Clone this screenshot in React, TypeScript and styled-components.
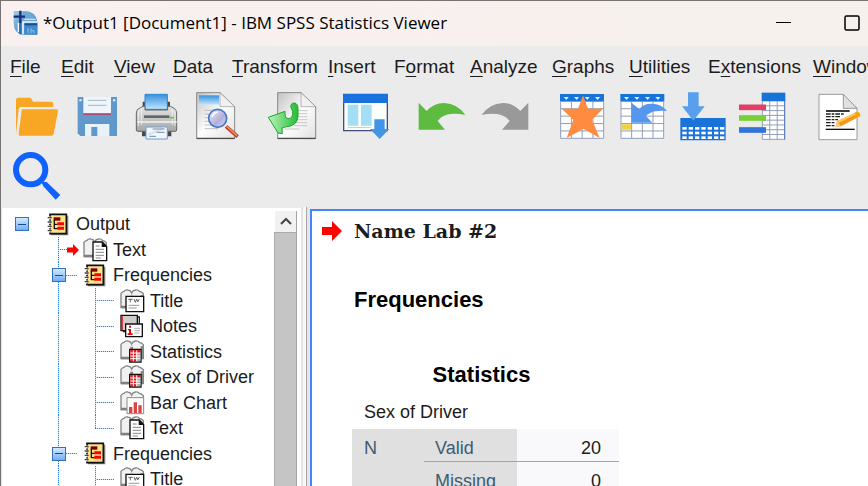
import React from "react";
import styled, { createGlobalStyle } from "styled-components";

const GlobalStyle = createGlobalStyle`
  *, *::before, *::after { box-sizing: border-box; }
  body { margin: 0; overflow: hidden; }
  button { font: inherit; color: inherit; background: none; border: 0; padding: 0; }
  svg { display: block; flex: none; }
`;

const sans = `"Liberation Sans", Arial, sans-serif`;

const Window = styled.div`
  display: flex;
  flex-direction: column;
  height: 100vh;
  overflow: hidden;
  background: #ebebeb;
  border-top: 1px solid #77726f;
  border-left: 1px solid #77726f;
  font-family: ${sans};
  color: #1b1b20;
`;

/* ---------- title bar ---------- */

const TitleBar = styled.header`
  display: flex;
  align-items: center;
  flex: none;
  height: 45px;
  padding: 0 8px 2px 12px;
  background: linear-gradient(90deg, #f9f0ef, #f6f1ed);
`;

const WindowTitle = styled.h1`
  flex: 1;
  margin: 0 0 0 5px;
  font: 400 17px/24px "Open Sans", "Noto Sans", sans-serif;
  color: #000;
  white-space: nowrap;
`;

const WindowControls = styled.div`
  display: flex;
  gap: 53px;
`;

/* ---------- menu bar ---------- */

const MenuBar = styled.nav`
  display: grid;
  flex: none;
  grid-template-columns: 51px 53px 59px 59px 96px 66px 76px 82px 77px 79px 105px auto;
  align-items: center;
  height: 41px;
  padding-left: 9px;
  overflow: hidden;
`;

const MenuItem = styled.button`
  font-size: 19px;
  line-height: 24px;
  text-align: left;
  white-space: nowrap;

  u {
    text-decoration-thickness: 1px;
    text-underline-offset: 3px;
  }
`;

/* ---------- tool bar ---------- */

const ToolBar = styled.div`
  display: flex;
  flex: none;
  flex-wrap: wrap;
  column-gap: 16px;
  padding-left: 6px;
`;

const ToolGroup = styled.div`
  display: flex;
`;

const ToolButton = styled.button`
  width: 60px;
  height: 60px;
`;

/* ---------- panes ---------- */

const Panes = styled.main`
  display: flex;
  flex: 1;
  min-height: 0;
`;

const Outline = styled.aside`
  display: flex;
  flex: none;
  width: 300px;
  margin-top: 1px;
  padding: 3px 4px 0 1px;
  background: #fff;
  border-left: 1px solid #e2e2e2;
  overflow: hidden;
`;

const Tree = styled.div`
  flex: 1;
  overflow: hidden;
`;

const TreeRow = styled.div`
  display: flex;
  align-items: center;
  height: 26px;

  &:nth-child(even) { height: 25px; }
`;

type GuideKind = "blank" | "line" | "branch" | "last";

const vertical = "repeating-linear-gradient(180deg, #2383e6 0 1px, #cfe5fb 1px 2px)";
const horizontal = "repeating-linear-gradient(90deg, #2383e6 0 1px, #cfe5fb 1px 2px)";
const guideImage: Record<GuideKind, string> = {
  blank: "none",
  line: `${vertical} 18px 0 / 1px 100% no-repeat`,
  branch: `${vertical} 18px 0 / 1px 100% no-repeat, ${horizontal} 18px 50% / 19px 1px no-repeat`,
  last: `${vertical} 18px 0 / 1px 50% no-repeat, ${horizontal} 18px 50% / 19px 1px no-repeat`,
};

const Guide = styled.span<{ $kind: GuideKind }>`
  display: flex;
  align-items: center;
  justify-content: center;
  flex: none;
  align-self: stretch;
  width: 37px;
  background: ${(p) => guideImage[p.$kind]};
`;

const Toggle = styled.button`
  display: flex;
  align-items: center;
  justify-content: center;
  width: 14px;
  height: 14px;
  background: linear-gradient(180deg, #d3e8fd, #6fb0f5);
  border: 1px solid #3570b5;

  &::before {
    content: "";
    width: 8px;
    height: 1px;
    background: #174b87;
  }
`;

const IconCell = styled.span`
  display: flex;
  align-items: center;
  justify-content: center;
  flex: none;
  width: 36px;
`;

const CurrentMark = styled.span`
  display: flex;
  width: 12px;
  margin-left: -16px;
  margin-right: 4px;
  background: #fff;
`;

const TreeLabel = styled.span`
  font-size: 18px;
  line-height: 24px;
  white-space: nowrap;
`;

const ScrollBar = styled.div`
  display: flex;
  flex-direction: column;
  flex: none;
  width: 23px;
  border-right: 1px solid #a3a3a3;
`;

const ScrollUp = styled.button`
  display: flex;
  align-items: center;
  justify-content: center;
  height: 21px;
  margin-left: 1px;
  background: #f1f1f1;
`;

const ScrollThumb = styled.div`
  flex: 1;
  background: #c5c5c5;
  border: solid #ababab;
  border-width: 1px 0 0 1px;
`;

const Splitter = styled.div`
  flex: none;
  width: 9px;
  background: linear-gradient(90deg, #e4e4e4 0 2px, #f8f8f8 2px 5px, #a6a6a6 5px 6px, #e6e6e6 6px 9px);
`;

const Viewer = styled.section`
  flex: 1;
  min-width: 0;
  margin-top: 2px;
  padding: 8px 0 0 10px;
  background: #fff;
  border: solid #4386fb;
  border-width: 2px 0 0 2px;
  overflow: hidden;
  white-space: nowrap;
`;

const LogEntry = styled.div`
  display: flex;
  align-items: center;
  gap: 12px;
  height: 24px;
`;

const LogTitle = styled.h2`
  margin: 0;
  font: 700 19px/24px "DejaVu Serif", serif;
`;

const Body = styled.div`
  padding: 43px 0 0 30px;
`;

const SectionTitle = styled.h3`
  margin: 0 0 43px 2px;
  font-size: 22px;
  line-height: 28px;
  color: #000;
`;

const StatsTable = styled.table`
  width: 267px;
  border-collapse: collapse;
  font-size: 18px;
  line-height: 24px;
`;

const StatsCaption = styled.caption`
  padding-left: 12px;
  text-align: left;
`;

const StatsTitle = styled.strong`
  display: block;
  padding: 4px 20px 11px 0;
  font-size: 22px;
  line-height: 28px;
  text-align: center;
  color: #000;
`;

const Variable = styled.span`
  display: block;
  margin-bottom: 5px;
`;

const GroupHead = styled.th`
  width: 72px;
  padding: 7px 12px;
  background: #e0e0e0;
  color: #3d5c73;
  font-weight: 400;
  text-align: left;
  vertical-align: top;
`;

const RowHead = styled.th`
  width: 93px;
  padding: 7px 11px 1px;
  background: #e0e0e0;
  border-bottom: 1px solid #a4a4a4;
  color: #3d5c73;
  font-weight: 400;
  text-align: left;
`;

const Value = styled.td`
  padding: 7px 18px 1px;
  background: #f9f9fb;
  border-bottom: 1px solid #a4a4a4;
  text-align: right;
`;

/* ---------- drawings ---------- */

const AppIcon = () => (
  <svg width="25" height="25" viewBox="38 28 75 75" aria-hidden="true">
    <defs>
      <linearGradient id="app" x1="0" y1="0" x2="1" y2="1">
        <stop offset="0" stopColor="#a9cbe6" />
        <stop offset=".5" stopColor="#5d9bd0" />
        <stop offset="1" stopColor="#2a78bd" />
      </linearGradient>
    </defs>
    <path d="M40 31h34q34 2 37 36v35H68Q40 98 40 66z" fill="url(#app)" />
    <path d="M68 33q34 0 41 34H68z" fill="#6ea6d6" />
    <path d="M72 56h34" stroke="#c8dff0" strokeWidth="4" />
    <path d="M68 101V64h42" fill="none" stroke="#eef6fb" strokeWidth="5" />
    <path d="M54 66v28" stroke="#eef6fb" strokeWidth="4" />
    <path d="M73 73h38v28H73z" fill="#3f8ccd" />
    <path d="M73 71h38" stroke="#174f94" strokeWidth="6" />
    <path d="M83 82v16M92 82v16M92 90h9v8" stroke="#8cc0ea" strokeWidth="3" fill="none" />
    <path d="M60 66v35" stroke="#2a69ae" strokeWidth="6" />
    <path d="M60 30v37M40 48h34" stroke="#10327c" strokeWidth="7" />
  </svg>
);

const Gradients = () => (
  <svg width="0" height="0" aria-hidden="true">
    <defs>
      <linearGradient id="paper" x1="0" y1="0" x2="1" y2="1">
        <stop offset="0" stopColor="#c2c2c2" />
        <stop offset=".5" stopColor="#fdfdfd" />
        <stop offset="1" stopColor="#e2e2e2" />
      </linearGradient>
      <linearGradient id="sky" x1="0" y1="0" x2="0" y2="1">
        <stop offset="0" stopColor="#3590dc" />
        <stop offset="1" stopColor="#c2e6fb" />
      </linearGradient>
      <linearGradient id="metal" x1="0" y1="0" x2="0" y2="1">
        <stop offset="0" stopColor="#e6e6e6" />
        <stop offset="1" stopColor="#a5a5a5" />
      </linearGradient>
      <linearGradient id="lens" x1="0" y1="0" x2="1" y2="1">
        <stop offset="0" stopColor="#f1f1fb" />
        <stop offset=".6" stopColor="#b1afd9" />
        <stop offset="1" stopColor="#d3e0f5" />
      </linearGradient>
      <linearGradient id="leafy" x1="0" y1="0" x2="1" y2="0">
        <stop offset="0" stopColor="#baf3ba" />
        <stop offset="1" stopColor="#25bd36" />
      </linearGradient>
    </defs>
  </svg>
);

const Folder = () => (
  <>
    <path d="M48 149V44q0-6 6-6h35q5 0 7 6l3 6h54q7 0 7 7v9H62q-5 0-6 6z" fill="#f8a725" />
    <path d="M68 73h101q6 0 5 6l-13 67q-1 6-7 6H60q-5 0-4-6l9-69q1-4 3-4z" fill="#f8a725" />
  </>
);

const Save = () => (
  <>
    <path d="M233 36h118v117H241l-8-8z" fill="#6099c9" />
    <path d="M250 36h83v50h-83z" fill="#eef6fc" />
    <path d="M250 87h83" stroke="#cb2453" strokeWidth="4" />
    <path d="M264 46h55M264 61h55" stroke="#a8b8c4" strokeWidth="3" />
    <path d="M238 46h7M339 46h7" stroke="#e8f3fb" strokeWidth="6" />
    <path d="M255 117h73v37h-73z" fill="#e7f2fb" />
    <path d="M274 126h18v27h-18z" fill="#6099c9" />
  </>
);

const Printer = () => (
  <>
    <path d="M428 50h82v28h-82zM426 130h88v24h-88z" fill="#484848" />
    <path d="M435 28h67v45h-67z" fill="url(#sky)" stroke="#2787d8" strokeWidth="3" />
    <path d="M409 135V84q0-12 12-16l8-4h6v11h68V64h8l8 4q11 5 11 16v51q0 4-5 4H414q-5 0-5-4z" fill="url(#metal)" stroke="#666" strokeWidth="3" />
    <path d="M415 75v48M424 72v48M517 72v48M525 75v48" stroke="#fff" strokeWidth="3" opacity=".65" />
    <path d="M432 95h76" stroke="#646464" strokeWidth="8" />
    <path d="M509 98h13" stroke="#5bd22d" strokeWidth="5" />
    <path d="M412 111h118" stroke="#f2f2f2" strokeWidth="5" />
    <path d="M438 126h64v36h-64z" fill="#eff6fe" stroke="#6e9fcc" strokeWidth="3" />
    <path d="M444 149l50-20" stroke="#cfe3f5" strokeWidth="6" />
    <path d="M458 132h35M470 142h24M448 154h20" stroke="#7b8b99" strokeWidth="3" />
  </>
);

const PageShape = ({ x }: { x: number }) => (
  <>
    <path d={`M${x} 23h70l44 42v96H${x}z`} fill="url(#paper)" stroke="#888" strokeWidth="3" />
    <path d={`M${x} 160h114`} stroke="#4b4b4b" strokeWidth="4" />
    <path d={`M${x + 70} 23v42h44z`} fill="#f1f1f1" stroke="#999" strokeWidth="2" />
  </>
);

const Preview = () => (
  <>
    <PageShape x={590} />
    <path d="M597 31h60v28h-60z" fill="url(#sky)" />
    <path d="M614 76h30M614 87h30M614 98h30M614 109h30M614 120h34M614 131h40" stroke="#a5a5a5" strokeWidth="2" />
    <path d="M678 124l35 31" stroke="#b64223" strokeWidth="11" />
    <path d="M680 124l31 28" stroke="#ff936c" strokeWidth="4" />
    <circle cx="653" cy="100" r="27" fill="url(#lens)" stroke="#4878c2" strokeWidth="5" />
    <path d="M636 96q4-13 17-15" fill="none" stroke="#fff" strokeWidth="5" />
  </>
);

const Recall = () => (
  <>
    <PageShape x={83} />
    <path d="M134 77h38M134 86h38M134 95h38M134 104h38M134 113h38M130 122h42M104 132h44" stroke="#b1b1b1" strokeWidth="2" />
    <path d="M55 97l50-18q-1 20 9 22 16 0 14-22l-6-14q2-12 11-11 11 1 11 18v23q-2 28-38 31l-10 3 1 17-13-2z" fill="url(#leafy)" stroke="#20a52e" strokeWidth="3" strokeLinejoin="round" />
  </>
);

const Dialog = () => (
  <>
    <path d="M281 28h131v109H281z" fill="#fbfffc" stroke="#454b80" strokeWidth="4" />
    <path d="M279 27h135v27H279z" fill="#1972dd" />
    <path d="M293 59h32v63h-32zM333 59h32v63h-32zM293 126h70v3h-70z" fill="#a3def4" />
    <path d="M373 103h31v29h14l-29 30-29-30h13z" fill="#4294e6" />
  </>
);

const Undo = () => (
  <path d="M506 53l24 25q22-24 52-24 42 2 64 36-25-6-46-3-26 4-37 21l22 26h-79z" fill="#5dbb40" />
);

const Redo = () => (
  <path d="M835 53l-24 25q-22-24-52-24-42 2-64 36 25-6 46-3 26 4 38 21l-23 26h79z" fill="#999" />
);

const GridShape = ({ x, y, w, h, cols, rows }: { x: number; y: number; w: number; h: number; cols: number; rows: number }) => {
  let d = `M${x} ${y}h${w}v${h}h${-w}z`;
  for (let i = 1; i < cols; i++) d += `M${x + (w * i) / cols} ${y}v${h}`;
  for (let i = 1; i < rows; i++) d += `M${x} ${y + (h * i) / rows}h${w}`;
  return <path d={d} fill="#fff" stroke="#919eb8" strokeWidth="3" />;
};

const HeaderMarks = ({ x }: { x: number }) => (
  <>
    <path d={`M${x} 27h132v22h-132z`} fill="#1873d9" />
    {[11, 42, 74, 105].map((dx) => (
      <path key={dx} d={`M${x + dx} 36h15l-7 9z`} fill="#d8efff" />
    ))}
  </>
);

const StarGrid = () => (
  <>
    <GridShape x={47} y={49} w={129} h={111} cols={4} rows={5} />
    <HeaderMarks x={45} />
    <path d="M114 31l15 40h45l-33 33 23 55-49-28-50 28 20-55-35-33h49z" fill="#ff8b41" />
  </>
);

const GotoVariable = () => (
  <>
    <GridShape x={228} y={49} w={128} h={111} cols={4} rows={5} />
    <HeaderMarks x={226} />
    <path d="M231 118h27v16h-27z" fill="#f0d137" />
    <path d="M259 53l24 19q14-17 38-16 29 1 45 22-35-2-49 5-11 6-14 10l19 20h-63z" fill="#5597ee" />
  </>
);

const InsertCases = () => (
  <>
    <path d="M406 99h136v67H406z" fill="#1973d9" />
    {[126, 140, 154].map((y) =>
      [412, 431, 450, 469, 488, 507, 525].map((x) => (
        <rect key={`${x}-${y}`} x={x} y={y} width="13" height="8" fill="#fff" />
      )),
    )}
    <path d="M429 22h32v42h18l-34 43-34-43h18z" fill="#58a0ee" />
  </>
);

const ValueLabels = () => (
  <>
    <GridShape x={652} y={48} w={67} h={115} cols={3} rows={8} />
    <path d="M650 23h71v25h-71z" fill="#1873d9" />
    <path d="M719 48v116" stroke="#557ab5" strokeWidth="3" />
    <path d="M582 67h81" stroke="#e13f65" strokeWidth="17" />
    <path d="M582 99h81" stroke="#78cf36" strokeWidth="17" />
    <path d="M582 135h81" stroke="#3273d9" strokeWidth="17" />
  </>
);

const Script = () => (
  <>
    <path d="M822 28h73l41 42v94H822z" fill="#fff" stroke="#9a9a9a" strokeWidth="3" />
    <path d="M895 28v42h41z" fill="#e1e1e1" stroke="#999" strokeWidth="3" />
    <path d="M843 78h71" stroke="#111" strokeWidth="5" />
    <path d="M843 87h55M843 95h42M843 104h36M843 113h28M843 122h25" stroke="#222" strokeWidth="4" strokeDasharray="14 3 8 3" />
    <path d="M842 133h87" stroke="#111" strokeWidth="4" />
    <path d="M871 125l5-16 57-27q12-2 13 11l-58 31z" fill="#f7971d" />
    <path d="M878 112l56-27" stroke="#ffd14b" strokeWidth="5" />
    <path d="M871 125l5-16 12 15z" fill="#ffc68b" />
    <path d="M932 82q12-4 14 10l-9 5-8-13z" fill="#f6a800" />
  </>
);

const Search = () => (
  <>
    <circle cx="92" cy="254" r="44" fill="none" stroke="#0f62fe" strokeWidth="18" />
    <path d="M124 290l6 14 37 40 14-14-41-39z" fill="#0f62fe" />
  </>
);

type Tool = { label: string; x: number; y?: number; Art: () => React.JSX.Element };

const toolGroups: Tool[][] = [
  [
    { label: "Open", x: 21, Art: Folder },
    { label: "Save", x: 201, Art: Save },
    { label: "Print", x: 381, Art: Printer },
    { label: "Print preview", x: 561, Art: Preview },
  ],
  [{ label: "Export", x: 39, Art: Recall }],
  [{ label: "Recall dialogs", x: 267, Art: Dialog }],
  [
    { label: "Undo", x: 495, Art: Undo },
    { label: "Redo", x: 675, Art: Redo },
  ],
  [
    { label: "Go to data", x: 18, Art: StarGrid },
    { label: "Go to variable", x: 198, Art: GotoVariable },
    { label: "Insert cases", x: 378, Art: InsertCases },
    { label: "Value labels", x: 558, Art: ValueLabels },
  ],
  [{ label: "Run script", x: 786, Art: Script }],
  [{ label: "Find", x: 21, y: 186, Art: Search }],
];

const NotebookIcon = () => (
  <svg width="22" height="23" viewBox="0 0 66 69" aria-hidden="true">
    <path d="M12 65h50V8" fill="none" stroke="#8a8a8a" strokeWidth="4" />
    <path d="M9 4h49v58H9z" fill="#ffe289" stroke="#111" strokeWidth="5" />
    <path d="M2 15h9M2 28h9M2 41h9M2 54h9" stroke="#fff" strokeWidth="9" />
    <path d="M2 14h12M2 27h12M2 40h12M2 53h12" stroke="#444" strokeWidth="4" />
    <path d="M20 18h20" stroke="#790000" strokeWidth="10" />
    <path d="M22 21v27M22 34h10M22 47h10" stroke="#111" strokeWidth="4" />
    <path d="M31 32h20M31 46h20" stroke="#f00" strokeWidth="9" />
  </svg>
);

type LeafKind = "page" | "title" | "notes" | "table" | "chart";

const LeafIcon = ({ kind }: { kind: LeafKind }) => (
  <svg width="25" height="24" viewBox="0 0 75 72" aria-hidden="true">
    {kind !== "notes" && (
      <>
        <path d="M3 56V13q4-5 9-6 4-6 12-4 8 1 11 9 3-8 11-9 9-1 12 4 7 1 12 7v42H3z" fill="#f1f1f1" stroke="#858585" strokeWidth="4" />
        <path d="M3 54h30M35 20v36" stroke="#808080" strokeWidth="8" />
        <path d="M66 18v36" stroke="#8a8a8a" strokeWidth="8" />
      </>
    )}
    {kind === "page" && (
      <>
        <path d="M30 12h28l13 14v42H30z" fill="#fff" stroke="#111" strokeWidth="4" />
        <path d="M56 12v15h15z" fill="#111" />
        <path d="M38 24h12M38 34h25M38 43h25M38 52h25M38 60h16" stroke="#888" strokeWidth="3" />
      </>
    )}
    {kind === "title" && (
      <>
        <path d="M18 22h53v46H18z" fill="#fff" stroke="#111" strokeWidth="4" />
        <path d="M25 31h13M31 31v9M42 30l4 10 4-10 3 9 5-9" fill="none" stroke="#666" strokeWidth="3" />
        <path d="M26 49h32M26 57h24" stroke="#999" strokeWidth="3" />
      </>
    )}
    {kind === "notes" && (
      <>
        <path d="M3 4h49v46H3z" fill="#d0cccc" stroke="#111" strokeWidth="4" />
        <path d="M6 7v42" stroke="#e01818" strokeWidth="5" />
        <path d="M53 9h5v44H9" fill="none" stroke="#222" strokeWidth="4" />
        <path d="M17 30h50v38H17z" fill="#fff" stroke="#111" strokeWidth="4" />
        <path d="M27 35h6v6h-6zM24 45h9v13h5v5H23v-5h4v-9h-3z" fill="#e00b0b" />
        <path d="M43 43h17M43 50h17M43 57h14" stroke="#aaa" strokeWidth="3" />
      </>
    )}
    {kind === "table" && (
      <>
        <path d="M29 28h34v38H29z" fill="#fff" stroke="#111" strokeWidth="4" />
        <path d="M31 30h20v34H31zM51 30h10v9H51z" fill="#f01717" />
        <path d="M51 39h10v25H51z" fill="#aaa" />
        <path d="M40 31v33M50 31v33M31 39h30M31 48h30M31 56h30" stroke="#fff" strokeWidth="3" />
      </>
    )}
    {kind === "chart" && (
      <>
        <path d="M21 20h50v48H21z" fill="#fff" stroke="#8a8a8a" strokeWidth="3" />
        <path d="M27 48h10v18H27zM41 34h10v32H41zM55 43h10v23H55z" fill="#d94444" />
      </>
    )}
  </svg>
);

const RedArrow = ({ size }: { size: number }) => (
  <svg width={size} height={size} viewBox="0 0 20 20" aria-hidden="true">
    <path d="M0 6h10V0l10 10-10 10v-6H0z" fill="#f00" />
  </svg>
);

/* ---------- data ---------- */

const menus: [string, string, string][] = [
  ["", "F", "ile"],
  ["", "E", "dit"],
  ["", "V", "iew"],
  ["", "D", "ata"],
  ["", "T", "ransform"],
  ["", "I", "nsert"],
  ["F", "o", "rmat"],
  ["", "A", "nalyze"],
  ["", "G", "raphs"],
  ["", "U", "tilities"],
  ["E", "x", "tensions"],
  ["", "W", "indow"],
];

type Node = {
  label: string;
  guides: GuideKind[];
  icon: "notebook" | LeafKind;
  current?: boolean;
};

const nodes: Node[] = [
  { label: "Output", guides: ["blank"], icon: "notebook" },
  { label: "Text", guides: ["blank", "branch"], icon: "page", current: true },
  { label: "Frequencies", guides: ["blank", "branch"], icon: "notebook" },
  { label: "Title", guides: ["blank", "line", "branch"], icon: "title" },
  { label: "Notes", guides: ["blank", "line", "branch"], icon: "notes" },
  { label: "Statistics", guides: ["blank", "line", "branch"], icon: "table" },
  { label: "Sex of Driver", guides: ["blank", "line", "branch"], icon: "table" },
  { label: "Bar Chart", guides: ["blank", "line", "branch"], icon: "chart" },
  { label: "Text", guides: ["blank", "line", "last"], icon: "page" },
  { label: "Frequencies", guides: ["blank", "branch"], icon: "notebook" },
  { label: "Title", guides: ["blank", "line", "branch"], icon: "title" },
];

const TreeNode = ({ node }: { node: Node }) => {
  const isGroup = node.icon === "notebook";
  return (
    <TreeRow role="treeitem" aria-level={node.guides.length}>
      {node.guides.map((kind, i) => (
        <Guide key={i} $kind={kind}>
          {isGroup && i === node.guides.length - 1 && <Toggle aria-label={`Collapse ${node.label}`} />}
        </Guide>
      ))}
      <IconCell>
        {node.current && (
          <CurrentMark>
            <RedArrow size={12} />
          </CurrentMark>
        )}
        {node.icon === "notebook" ? <NotebookIcon /> : <LeafIcon kind={node.icon} />}
      </IconCell>
      <TreeLabel>{node.label}</TreeLabel>
    </TreeRow>
  );
};

export default function App() {
  return (
    <Window>
      <GlobalStyle />
      <TitleBar>
        <AppIcon />
        <WindowTitle>*Output1 [Document1] - IBM SPSS Statistics Viewer</WindowTitle>
        <WindowControls>
          <button aria-label="Minimize">
            <svg width="16" height="16" viewBox="0 0 32 32">
              <path d="M2 15h30" stroke="#000" strokeWidth="2" />
            </svg>
          </button>
          <button aria-label="Maximize">
            <svg width="16" height="16" viewBox="0 0 32 32">
              <rect x="2" y="2" width="28" height="28" rx="3" fill="none" stroke="#000" strokeWidth="3" />
            </svg>
          </button>
        </WindowControls>
      </TitleBar>

      <MenuBar aria-label="Main menu">
        {menus.map(([before, key, after]) => (
          <MenuItem key={before + key + after}>
            {before}
            <u>{key}</u>
            {after}
          </MenuItem>
        ))}
      </MenuBar>

      <ToolBar role="toolbar" aria-label="Viewer tools">
        {toolGroups.map((group) => (
          <ToolGroup key={group[0].label}>
            {group.map(({ label, x, y = 6, Art }) => (
              <ToolButton key={label} aria-label={label}>
                <svg width="60" height="60" viewBox={`${x} ${y} 180 180`}>
                  <Art />
                </svg>
              </ToolButton>
            ))}
          </ToolGroup>
        ))}
      </ToolBar>

      <Panes>
        <Outline>
          <Tree role="tree" aria-label="Output outline">
            {nodes.map((node, i) => (
              <TreeNode key={i} node={node} />
            ))}
          </Tree>
          <ScrollBar>
            <ScrollUp aria-label="Scroll up">
              <svg width="14" height="14" viewBox="0 0 14 14">
                <path d="M2 9l5-5 5 5" fill="none" stroke="#444" strokeWidth="2" />
              </svg>
            </ScrollUp>
            <ScrollThumb />
          </ScrollBar>
        </Outline>
        <Splitter />
        <Viewer>
          <LogEntry>
            <RedArrow size={20} />
            <LogTitle>Name Lab #2</LogTitle>
          </LogEntry>
          <Body>
            <SectionTitle>Frequencies</SectionTitle>
            <StatsTable>
              <StatsCaption>
                <StatsTitle>Statistics</StatsTitle>
                <Variable>Sex of Driver</Variable>
              </StatsCaption>
              <tbody>
                <tr>
                  <GroupHead rowSpan={2} scope="rowgroup">N</GroupHead>
                  <RowHead scope="row">Valid</RowHead>
                  <Value>20</Value>
                </tr>
                <tr>
                  <RowHead scope="row">Missing</RowHead>
                  <Value>0</Value>
                </tr>
              </tbody>
            </StatsTable>
          </Body>
        </Viewer>
      </Panes>
      <Gradients />
    </Window>
  );
}
